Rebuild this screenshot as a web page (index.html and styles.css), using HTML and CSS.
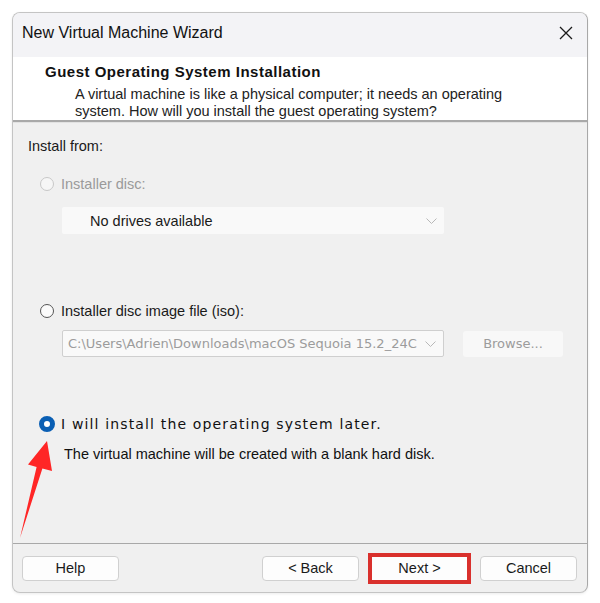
FILE: index.html
```html
<!DOCTYPE html>
<html>
<head>
<meta charset="utf-8">
<link rel="stylesheet" href="styles.css">
</head>
<body>
<div class="window">
  <div class="titlebar">
    <span class="title">New Virtual Machine Wizard</span>
    <svg class="close" width="14" height="14" viewBox="0 0 14 14"><path d="M1 1 L13 13 M13 1 L1 13" stroke="#1a1a1a" stroke-width="1.3" fill="none"/></svg>
  </div>
  <div class="header">
    <div class="h-title">Guest Operating System Installation</div>
    <div class="h-desc">A virtual machine is like a physical computer; it needs an operating<br>system. How will you install the guest operating system?</div>
  </div>
  <div class="content">
    <div class="install-from">Install from:</div>
    <div class="radio-row disabled r1">
      <span class="radio"></span><span class="label">Installer disc:</span>
    </div>
    <div class="combo disabled-combo c1">
      <span class="combo-text">No drives available</span>
      <svg class="chev" width="11" height="6" viewBox="0 0 11 6"><path d="M0.5 0.5 L5.5 5.5 L10.5 0.5" stroke="#b8b8b8" stroke-width="1" fill="none"/></svg>
    </div>
    <div class="radio-row r2">
      <span class="radio"></span><span class="label">Installer disc image file (iso):</span>
    </div>
    <div class="path-row">
      <div class="combo path-combo">
        <span class="path-text">C:\Users\Adrien\Downloads\macOS Sequoia 15.2_24C</span>
        <svg class="chev" width="11" height="6" viewBox="0 0 11 6"><path d="M0.5 0.5 L5.5 5.5 L10.5 0.5" stroke="#b8b8b8" stroke-width="1" fill="none"/></svg>
      </div>
      <div class="browse">Browse...</div>
    </div>
    <div class="radio-row r3">
      <span class="radio checked"></span><span class="label tah">I will install the operating system later.</span>
    </div>
    <div class="later-desc">The virtual machine will be created with a blank hard disk.</div>
  </div>
  <div class="footer">
    <div class="btn">Help</div>
    <div class="spacer"></div>
    <div class="btn">&lt; Back</div>
    <div class="btn next">Next &gt;</div>
    <div class="btn">Cancel</div>
  </div>
</div>
<svg class="arrow" width="600" height="603" viewBox="0 0 600 603">
  <polygon points="47,441 52,471 42.4,468.5 20,538 36.6,467 28,464.5" fill="#ff2626"/>
</svg>
</body>
</html>
```
FILE: styles.css
```css
html, body {
  margin: 0;
  padding: 0;
  background: #ffffff;
}
body {
  width: 600px;
  height: 603px;
  position: relative;
  font-family: "Liberation Sans", Arial, sans-serif;
  color: #1a1a1a;
  overflow: hidden;
}
.window {
  position: relative;
  margin: 12px 0 0 12px;
  width: 574px;
  height: 579px;
  border: 1px solid #c4c4c4;
  border-right-color: #a8a8a8;
  border-radius: 8px;
  overflow: hidden;
  display: flex;
  flex-direction: column;
  background: #f0f0f0;
  box-shadow: 0 1px 3px rgba(0,0,0,0.08);
}
.titlebar {
  height: 44px;
  flex: none;
  box-sizing: border-box;
  background: #f3f3f6;
  display: flex;
  align-items: center;
  padding: 0 0 4px 9px;
}
.title {
  font-size: 16px;
  flex: 1;
  color: #111;
}
.close {
  margin-right: 14px;
}
.header {
  height: 65px;
  flex: none;
  background: #ffffff;
  border-bottom: 2px solid #a9a9a9;
  box-sizing: border-box;
  padding: 6px 0 0 32px;
}
.h-title {
  font-weight: bold;
  font-size: 15px;
  letter-spacing: 0.5px;
  line-height: 18px;
  color: #111;
}
.h-desc {
  font-size: 14.5px;
  line-height: 17px;
  padding: 5px 0 0 30px;
  color: #222;
}
.content {
  flex: 1;
  border-top: 1px solid #e2e2e2;
  padding: 0 0 0 15px;
  border-bottom: 1px solid #a8a8a8;
  font-size: 14.5px;
}
.install-from {
  margin-top: 13px;
  line-height: 20px;
}
.radio-row {
  display: flex;
  align-items: center;
  height: 20px;
  margin-left: 12px;
}
.radio {
  width: 14px;
  height: 14px;
  border: 1px solid #555;
  border-radius: 50%;
  box-sizing: border-box;
  background: #fbfbfb;
  margin-right: 7px;
  flex: none;
}
.disabled .radio {
  border-color: #c8c8c8;
  background: #f6f6f6;
}
.disabled .label {
  color: #9a9a9a;
}
.radio.checked {
  width: 16px;
  height: 16px;
  margin-left: -1px;
  margin-right: 6px;
  border: 5px solid #0a5fb4;
  background: #ffffff;
}
.r1 { margin-top: 18px; }
.r2 { margin-top: 67px; }
.r3 { margin-top: 57px; }
.combo {
  height: 27px;
  width: 382px;
  box-sizing: border-box;
  margin-left: 34px;
  display: flex;
  align-items: center;
  position: relative;
  background: #f9f9f9;
  border-radius: 2px;
}
.c1 { margin-top: 13px; }
.combo-text {
  padding-left: 28px;
  flex: 1;
  color: #1a1a1a;
}
.chev {
  margin-right: 7px;
  flex: none;
}
.path-row {
  display: flex;
  margin-top: 9px;
  align-items: center;
}
.path-combo {
  border: 1px solid #cfcfcf;
  overflow: hidden;
}
.path-text {
  flex: 1;
  padding-left: 5px;
  white-space: nowrap;
  overflow: hidden;
  font-family: "DejaVu Sans", Verdana, sans-serif;
  font-size: 13px;
  color: #9c9c9c;
}
.browse {
  width: 100px;
  height: 26px;
  margin-left: 19px;
  background: #f8f8f8;
  border-radius: 3px;
  display: flex;
  align-items: center;
  justify-content: center;
  font-family: "DejaVu Sans", Verdana, sans-serif;
  font-size: 13px;
  color: #9c9c9c;
}
.tah {
  font-family: "DejaVu Sans", Verdana, sans-serif;
  font-size: 14px;
  letter-spacing: 1.15px;
  color: #111;
}
.later-desc {
  margin-top: 10px;
  margin-left: 36px;
  line-height: 20px;
  color: #111;
}
.footer {
  height: 48px;
  flex: none;
  display: flex;
  align-items: center;
  padding: 0 10px 0 9px;
  gap: 12px;
}
.spacer { flex: 1; }
.btn {
  width: 97px;
  height: 25px;
  box-sizing: border-box;
  border: 1px solid #d0d0d0;
  border-radius: 4px;
  background: #fdfdfd;
  display: flex;
  align-items: center;
  justify-content: center;
  font-size: 14.5px;
  color: #1a1a1a;
}
.next {
  border-radius: 0;
  border-color: #fdfdfd;
  outline: 4px solid #d9302c;
  outline-offset: -1px;
}
.arrow {
  position: absolute;
  left: 0;
  top: 0;
  pointer-events: none;
}
```
